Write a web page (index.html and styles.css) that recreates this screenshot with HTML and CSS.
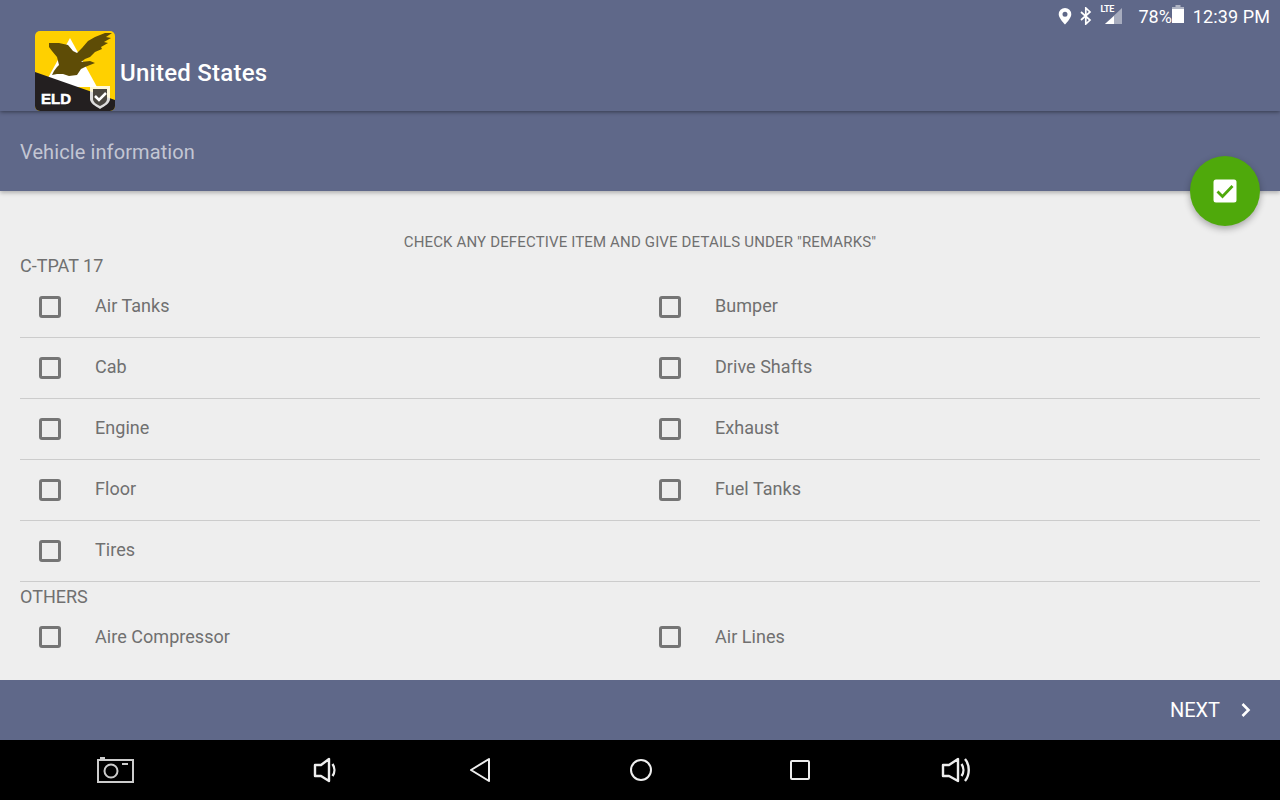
FILE: index.html
```html
<!DOCTYPE html>
<html lang="en">
<head>
    <meta charset="UTF-8">
    <meta name="viewport" content="width=device-width, initial-scale=1.0">
    <title>Vehicle information</title>
    <link rel="stylesheet" href="styles.css">
</head>
<body>
    <div class="app">
        <header class="topbar">
            <div class="status">
                <svg class="st-pin" width="14" height="18" viewBox="0 0 14 18"><path fill="#fff" fill-rule="evenodd" d="M7 1a6.300 6.300 0 0 0-6.300 6.300C.7 11.500 7 17.500 7 17.500s6.300-6 6.300-10.200A6.300 6.300 0 0 0 7 1zm0 3.800a2.500 2.500 0 1 1 0 5 2.500 2.500 0 0 1 0-5z"/></svg>
                <svg class="st-bt" width="12" height="18" viewBox="0 0 12 18"><path fill="none" stroke="#fff" stroke-width="1.700" d="M1 5l9 8-4.200 4V1L10 5 1 13"/></svg>
                <div class="st-signal">
                    <span class="st-lte">LTE</span>
                    <svg width="18" height="18" viewBox="0 0 18 18"><path fill="#fff" fill-opacity=".45" d="M18 1v16H1z"/><path fill="#fff" d="M10 9v8H1z"/></svg>
                </div>
                <span class="st-batt-text">78%</span>
                <svg class="st-batt" width="12" height="18" viewBox="0 0 12 18"><path fill="#fff" fill-opacity=".5" d="M3.500 0h5v2H12v2H0V2h3.500z"/><path fill="#fff" d="M0 4h12v14H0z"/></svg>
                <span class="st-time">12:39 PM</span>
            </div>
            <div class="brand">
                <svg class="logo" width="80" height="80" viewBox="0 0 80 80">
                    <defs><clipPath id="logo-clip"><rect width="80" height="80" rx="5"/></clipPath></defs>
                    <g clip-path="url(#logo-clip)">
                        <rect width="80" height="80" fill="#ffd000"/>
                        <path fill="#fff" d="M35 7L62 56H8z"/>
                        <path fill="#5e4c06" d="M14 12L24 12 33 14 38 20 42 22 47 17 53 10 60 6 70 2 77 2 71 6 76 7 69 11 73 12 66 16 67 18 60 21 55 26 50 28 46 31 55 30 60 32 55 34 50 36 46 38 42 44 34 45 28 43 22 43 17 44 19 40 22 36 24 34 22 26 17 20 14 16z"/>
                        <path fill="#231f20" d="M0 41l80 28v11H0z"/>
                        <path fill="#fff" fill-opacity=".85" d="M55 55h20v13c0 4-5 7-10 10-5-3-10-6-10-10z"/>
                        <path fill="#4a4640" d="M58 58h14v10c0 3-3 5-7 7-4-2-7-4-7-7z"/>
                        <path fill="none" stroke="#fff" stroke-width="2.500" d="M60 65l4 4 7-7"/>
                    </g>
                    <text class="logo-text" x="6" y="73">ELD</text>
                </svg>
                <span class="brand-name">United States</span>
            </div>
        </header>

        <div class="subbar">
            <span class="subbar-title">Vehicle information</span>
            <button class="fab">
                <svg width="24" height="24" viewBox="0 0 24 24"><rect width="23" height="23" x=".5" y=".5" rx="2.500" fill="#fff"/><path fill="none" stroke="#4fa90b" stroke-width="2.800" d="M4.500 12.500l5 5 10-10.500"/></svg>
            </button>
        </div>

        <main class="content">
            <p class="hint">CHECK ANY DEFECTIVE ITEM AND GIVE DETAILS UNDER "REMARKS"</p>
            <h2 class="group">C-TPAT 17</h2>
            <div class="row">
                <label class="item"><span class="box"></span>Air Tanks</label>
                <label class="item"><span class="box"></span>Bumper</label>
            </div>
            <div class="row">
                <label class="item"><span class="box"></span>Cab</label>
                <label class="item"><span class="box"></span>Drive Shafts</label>
            </div>
            <div class="row">
                <label class="item"><span class="box"></span>Engine</label>
                <label class="item"><span class="box"></span>Exhaust</label>
            </div>
            <div class="row">
                <label class="item"><span class="box"></span>Floor</label>
                <label class="item"><span class="box"></span>Fuel Tanks</label>
            </div>
            <div class="row">
                <label class="item"><span class="box"></span>Tires</label>
            </div>
            <h2 class="group group-next">OTHERS</h2>
            <div class="row row-last">
                <label class="item"><span class="box"></span>Aire Compressor</label>
                <label class="item"><span class="box"></span>Air Lines</label>
            </div>
        </main>

        <footer class="footer">
            <span class="next">NEXT</span>
            <svg width="12" height="16" viewBox="0 0 12 16"><path fill="none" stroke="#fff" stroke-width="2.600" d="M2.500 2l6 6-6 6"/></svg>
        </footer>

        <nav class="navbar">
            <svg width="40" height="28" viewBox="0 0 40 28"><g fill="none" stroke="#ccc" stroke-width="2"><path d="M2 4h35v22H2z"/><circle cx="15" cy="15" r="6.500"/></g><path fill="#ccc" d="M4 1h5v2H4zM26 7h6v2h-6z"/></svg>
            <svg width="26" height="28" viewBox="0 0 26 28"><path fill="none" stroke="#eee" stroke-width="2.400" stroke-linejoin="round" d="M2 9h6l8-6v22l-8-5H2zM19.500 8c2.500 3.500 2.500 8.500 0 12"/></svg>
            <svg width="22" height="26" viewBox="0 0 22 26"><path fill="none" stroke="#eee" stroke-width="2" stroke-linejoin="round" d="M20 2L2 13l18 11z"/></svg>
            <svg width="24" height="24" viewBox="0 0 24 24"><circle cx="12" cy="12" r="10" fill="none" stroke="#eee" stroke-width="2"/></svg>
            <svg width="20" height="20" viewBox="0 0 20 20"><rect x="1" y="1" width="18" height="18" rx="1" fill="none" stroke="#eee" stroke-width="2"/></svg>
            <svg width="30" height="28" viewBox="0 0 30 28"><path fill="none" stroke="#eee" stroke-width="2.400" stroke-linejoin="round" d="M2 9h6l9-6v22l-9-5H2zM20.500 8c2.500 3.500 2.500 8.500 0 12M24 3c5 6 5 16 0 22"/></svg>
        </nav>
    </div>
</body>
</html>
```

FILE: styles.css
```css
* {
    margin: 0;
    padding: 0;
    box-sizing: border-box;
}

body {
    font-family: Roboto, sans-serif;
    background: #eee;
    color: #707070;
    overflow: hidden;
}

.app {
    width: 1280px;
    height: 800px;
    display: flex;
    flex-direction: column;
}

.topbar {
    height: 111px;
    background: #5f6889;
    box-shadow: 0 1px 4px rgba(0, 0, 0, 0.45);
    position: relative;
    z-index: 2;
}

.status {
    height: 31px;
    padding: 1px 10px 0 0;
    display: flex;
    justify-content: flex-end;
    align-items: center;
    color: #fff;
    font-size: 18px;
}

.st-pin {
    margin-right: 8px;
}

.st-bt {
    margin-right: 12px;
}

.st-signal {
    position: relative;
    width: 18px;
    height: 18px;
    margin-right: 16px;
}

.st-signal svg {
    display: block;
}

.st-lte {
    position: absolute;
    left: -4px;
    top: -2px;
    font-size: 9px;
    font-weight: 700;
    letter-spacing: -0.3px;
    line-height: 9px;
}

.st-batt {
    margin-top: -4px;
}

.st-time {
    margin-left: 9px;
    letter-spacing: 0.1px;
}

.brand {
    display: flex;
    align-items: center;
    padding-left: 35px;
}

.logo {
    display: block;
}

.logo-text {
    fill: #fff;
    font-family: "Liberation Sans", sans-serif;
    font-weight: 700;
    font-size: 15px;
    stroke: #fff;
    stroke-width: 0.5;
}

.brand-name {
    margin: 3px 0 0 5px;
    font-size: 24px;
    font-weight: 500;
    letter-spacing: 0.25px;
    color: #fff;
}

.subbar {
    height: 80px;
    background: #5f6889;
    box-shadow: 0 2px 4px rgba(0, 0, 0, 0.25);
    padding: 2px 0 0 20px;
    display: flex;
    align-items: center;
    position: relative;
    z-index: 1;
}

.subbar-title {
    font-size: 20px;
    letter-spacing: 0.1px;
    color: #c3c6d3;
}

.fab {
    position: absolute;
    right: 20px;
    top: 45px;
    width: 70px;
    height: 70px;
    border: none;
    border-radius: 50%;
    background: #4fa90b;
    box-shadow: 0 3px 7px rgba(0, 0, 0, 0.3);
    display: flex;
    align-items: center;
    justify-content: center;
}

.content {
    height: 489px;
    padding: 41px 20px 0;
    overflow: hidden;
}

.hint {
    font-size: 15px;
    line-height: 20px;
    text-align: center;
    letter-spacing: 0.15px;
}

.group {
    font-size: 18px;
    font-weight: 400;
    line-height: 23px;
    height: 25px;
    padding-top: 2px;
}

.group-next {
    padding-top: 3px;
}

.row {
    height: 61px;
    display: grid;
    grid-template-columns: 620px 620px;
    align-items: center;
    border-bottom: 1px solid #ccc;
}

.row-last {
    border-bottom: none;
}

.item {
    display: flex;
    align-items: center;
    gap: 34px;
    padding-left: 19px;
    margin-top: -2px;
    font-size: 18px;
    letter-spacing: 0.04px;
    line-height: 24px;
}

.box {
    width: 22px;
    height: 22px;
    border: 3px solid #757575;
    border-radius: 3px;
    margin: 2px 0 1px;
}

.footer {
    height: 60px;
    background: #5f6889;
    color: #fff;
    display: flex;
    align-items: center;
    justify-content: flex-end;
    gap: 20px;
    padding-right: 28px;
}

.next {
    font-size: 20px;
}

.navbar {
    height: 60px;
    background: #000;
    padding-left: 96px;
    display: flex;
    align-items: center;
}

.navbar svg:nth-child(1) { margin-right: 177px; }
.navbar svg:nth-child(2) { margin-right: 130px; }
.navbar svg:nth-child(3) { margin-right: 138px; }
.navbar svg:nth-child(4) { margin-right: 137px; }
.navbar svg:nth-child(5) { margin-right: 131px; }
```
